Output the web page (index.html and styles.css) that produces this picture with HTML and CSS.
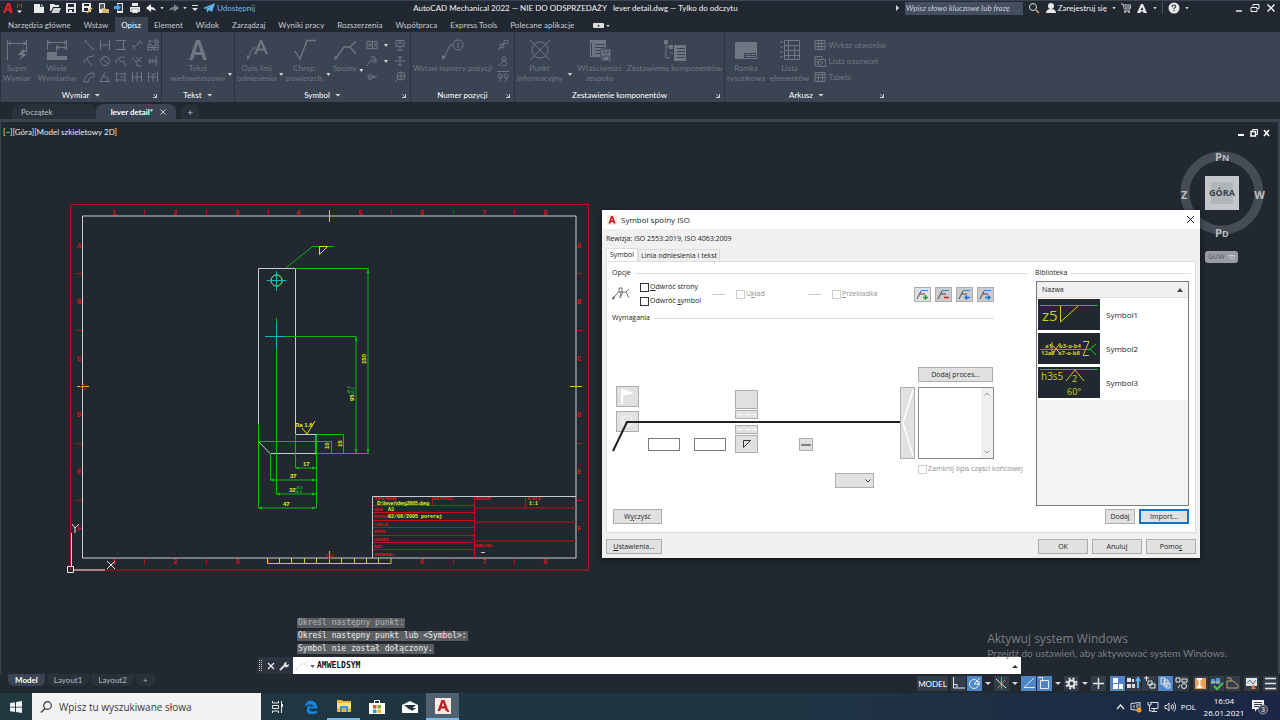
FILE: index.html
```html
<!DOCTYPE html>
<html lang="pl">
<head>
    <meta charset="UTF-8">
    <meta name="viewport" content="width=device-width, initial-scale=1.0">
    <title>AutoCAD Mechanical 2022</title>
    <link rel="stylesheet" href="styles.css">
</head>
<body>
<div class="app">
    <header class="titlebar">
        <div class="quick-tools">
            <svg class="logo" width="24" height="14" viewBox="0 0 24 14"><path fill="#d8232a" d="M2 12L6 2h3l3 10H9l-.7-2.4H5.4L4.6 12zM6 7.6h2L7.200 4.500z"/><path stroke="#d8232a" fill="none" d="M16.500 7V3l2 2 2-2v4"/><path fill="#eee" d="M16 9.500h5L18.500 12z"/></svg>
            <button class="tool" aria-label="Nowy"><svg width="12" height="12"><path fill="#e8e8e8" d="M1 2h6v3h4v6H1z"/><path fill="#b5b5b5" d="M8 2l3 2.500H8z"/></svg></button>
            <button class="tool" aria-label="Otwórz"><svg width="12" height="12"><path fill="#e8e8e8" d="M1 2h4l1 1h4v2H4l-2 4H1z"/><path fill="#cfcfcf" d="M4.500 6H12l-2 5H2.500z"/></svg></button>
            <button class="tool" aria-label="Zapisz"><svg width="12" height="12"><path fill="#e8e8e8" fill-rule="evenodd" d="M1 1h10v10H1zM3 2v3h6V2zM3 7v3h6V7z"/><path fill="#e8e8e8" d="M4 8h3v2H4z"/></svg></button>
            <button class="tool" aria-label="Zapisz jako"><svg width="12" height="12"><path fill="#e8e8e8" fill-rule="evenodd" d="M1 1h9v9H1zM3 2v2h5V2zM3 6v3h4V6z"/><path stroke="#e3b341" stroke-width="1.500" d="M6 11l5-5"/></svg></button>
            <button class="tool" aria-label="Otwórz z sieci"><svg width="12" height="12"><path fill="#e8e8e8" d="M2 1h6v10H2z"/><path fill="#555c66" d="M3 2h4v5H3z"/><path fill="#d9b768" d="M5 6h3l1 1h3v4H5z"/></svg></button>
            <button class="tool" aria-label="Zapisz w sieci"><svg width="12" height="12"><path fill="#e8e8e8" d="M4 1h6v10H4z"/><path fill="#34404e" d="M5 2h4v7H5z"/><path fill="#4ba3e3" d="M1 4h3V2l4 3.500L4 9V7H1z"/></svg></button>
            <button class="tool" aria-label="Drukuj"><svg width="12" height="12"><path fill="#e8e8e8" d="M3 1h6v3H3zM1 5h10v5H1z"/><path fill="#fff" stroke="#555" stroke-width=".5" d="M3 7h6v4H3z"/></svg></button>
            <button class="tool" aria-label="Cofnij"><svg width="12" height="12"><path fill="#eee" d="M1 6l5-4v3q4 0 5 4-2-2-5-1.500V10z"/></svg></button>
            <i class="caret"></i>
            <button class="tool dim" aria-label="Ponów"><svg width="12" height="12"><path fill="#7d848e" d="M11 6L6 2v3Q2 5 1 9q2-2 5-1.500V10z"/></svg></button>
            <i class="caret"></i>
            <button class="tool narrow" aria-label="Dostosuj"><svg width="6" height="8"><path fill="#ddd" d="M0 1h6v1H0zM0 4h6L3 7z"/></svg></button>
            <button class="share"><svg width="12" height="10"><path fill="#5db4f0" d="M0 5L12 0 9 9 6 7 4 10 3.500 6 9 2 2.500 6z"/></svg>Udostępnij</button>
        </div>
        <div class="window-title"><span>AutoCAD Mechanical 2022 — NIE DO ODSPRZEDAŻY</span><span>lever detail.dwg — Tylko do odczytu</span></div>
        <div class="account">
            <svg width="4" height="6"><path fill="#ddd" d="M0 0l3 3-3 3z"/></svg>
            <input class="keyword" type="text" aria-label="Wyszukaj" placeholder="Wpisz słowo kluczowe lub frazę">
            <svg width="12" height="12" fill="none"><circle cx="5" cy="5" r="3.500" stroke="#ddd"/><path stroke="#d9a860" stroke-width="1.500" d="M8 8l3 3"/></svg>
            <button class="sign-in"><svg width="12" height="12" fill="#e8e8e8"><circle cx="6" cy="4" r="3"/><path d="M1 11q0-4 5-4t5 4z"/></svg>Zarejestruj się</button>
            <i class="caret"></i>
            <svg width="10" height="10" fill="none" stroke="#ccc"><path d="M0 1h2l1.500 5H9l1-4H2.500M3 8h6M4 4h5"/><circle cx="4" cy="9" r=".7"/><circle cx="8" cy="9" r=".7"/></svg>
            <svg width="12" height="11" fill="#e8e8e8"><path fill-rule="evenodd" d="M5 1h2l4 9H8L6 8l-2 2H1zM6 4L4.500 7h3z"/></svg>
            <i class="caret"></i>
            <b class="bar"></b>
            <svg width="12" height="12"><circle cx="6" cy="6" r="5.500" fill="#e8e8e8"/><path fill="none" stroke="#333b46" stroke-width="1.200" d="M4.300 5Q4.300 3 6 3t1.700 1.700Q7.700 5.500 6 6.200V7.200M6 8v1.200"/></svg>
            <i class="caret"></i>
        </div>
        <div class="window-buttons">
            <button aria-label="Minimalizuj"><svg width="10" height="10"><path stroke="#eee" stroke-width="1.500" d="M2 8h6"/></svg></button>
            <button aria-label="Przywróć"><svg width="10" height="10" fill="none" stroke="#eee"><path d="M3 3.500V1.500h6v4H7M1 4.500h6v4H1z"/></svg></button>
            <button aria-label="Zamknij"><svg width="10" height="10"><path stroke="#fff" stroke-width="1.300" d="M1.500 1.500l7 7m0-7l-7 7"/></svg></button>
        </div>
    </header>

    <nav class="ribbon-tabs">
        <button>Narzędzia główne</button>
        <button>Wstaw</button>
        <button class="active">Opisz</button>
        <button>Element</button>
        <button>Widok</button>
        <button>Zarządzaj</button>
        <button>Wyniki pracy</button>
        <button>Rozszerzenia</button>
        <button>Współpraca</button>
        <button>Express Tools</button>
        <button>Polecane aplikacje</button>
        <button aria-label="Widok wstążki"><svg width="18" height="7"><rect y="1" width="11" height="5" rx="1" fill="#ddd"/><path fill="#333" d="M4 4.500l1.500-2 1.500 2z"/><path fill="#ccc" d="M13 3h4l-2 2z"/></svg></button>
    </nav>

    <section class="ribbon">
        <div class="panel panel-dim">
            <div class="panel-body">
                <button class="big"><svg width="22" height="22"><path d="M1.500 1v20M20.500 1v12M2 4.500h18M5 2.500L2 4.500l3 2M17 2.500l3 2-3 2"/><path class="solid" d="M17 10l-5 6h4l-3 5 8-6h-4l3-3z"/></svg><span>Super<br>Wymiar</span></button>
                <button class="big"><svg width="22" height="22"><path d="M1.500 1v10M20.500 1v10M2 3.500h18M10.500 6v6M11 8.500h9M4 2L2 3.500 4 5M18 2l2 1.500L18 5M13 7l-2 1.500 2 1.500M18 7l2 1.500-2 1.500"/><path class="solid" d="M1 13h10v4h10v4H1z"/></svg><span>Wiele<br>Wymiarów</span></button>
                <div class="small-grid five">
                    <button aria-label="Wyrównany"><svg width="12" height="12"><path d="M1 3l3-2M2 2l8 8M8 11l3-2"/></svg></button>
                    <button aria-label="Poziomy"><svg width="12" height="12"><path d="M1.500 1v10M10.500 1v10M2 6h8"/></svg></button>
                    <button aria-label="Pionowy"><svg width="12" height="12"><path d="M1 1.500h10M1 10.500h10M8.500 2v8"/></svg></button>
                    <button aria-label="Obrócony"><svg width="12" height="12"><path d="M1 6l3 4M8 1l3 4M3 8l6-5"/></svg></button>
                    <button aria-label="Układ wymiarów"><svg width="12" height="12"><path d="M1 2h5M1 4h3M8 1h3v3H8zM1 6h4v5H1zM7 6h4v5H7zM1 8.500h10"/></svg></button>
                    <button aria-label="Promień"><svg width="12" height="12"><path d="M11 1Q2 1 1 8M4 4l5 7"/></svg></button>
                    <button aria-label="Średnica"><svg width="12" height="12"><circle cx="6" cy="6" r="4.500"/><path d="M3 3l6 6"/></svg></button>
                    <button aria-label="Skrócony"><svg width="12" height="12"><path d="M1 8q0-7 9-6M4 4l2 3 2-1 3 5"/></svg></button>
                    <button aria-label="Współrzędna"><svg width="12" height="12"><path d="M1 3l4 4M5 2l5 5M5 7l6-5M6 7v4h5"/></svg></button>
                    <button aria-label="Oś"><svg width="12" height="12"><path d="M1 6h10M3 3v6M9 1v10M6 4v4"/></svg></button>
                    <button aria-label="Łuk"><svg width="12" height="12"><path d="M1 11Q2 2 11 2M5 11q0-5 6-5M1 11h4M11 2v4"/></svg></button>
                    <button aria-label="Kąt"><svg width="12" height="12"><path d="M6 1L1 10.500h10M4 5q5 0 5 5"/></svg></button>
                    <button aria-label="Bazowy"><svg width="12" height="12"><path d="M1.500 1v10M2 3h8M2 9h8M10 1v4M10 7v4M5 6h6"/></svg></button>
                    <button aria-label="Szeregowy"><svg width="12" height="12"><path d="M1.500 1v10M6 1v10M10.500 1v10M2 6h9"/></svg></button>
                    <button aria-label="Podział"><svg width="12" height="12"><path d="M1.500 1v10M6 3v8M10.500 1v10M2 6h9M4 3h5"/></svg></button>
                </div>
            </div>
            <div class="panel-title"><span>Wymiar</span><i class="caret wide"></i><i class="launch"></i></div>
        </div>
        <div class="panel panel-text">
            <div class="panel-body">
                <button class="big"><svg width="22" height="22"><path class="solid" fill-rule="evenodd" d="M2 21L9 1h4l7 20h-4l-1.500-5H7.500L6 21zM8.500 13h5L11 5z"/></svg><span>Tekst<br>wielowierszowy</span></button>
                <i class="caret"></i>
            </div>
            <div class="panel-title"><span>Tekst</span><i class="caret wide"></i></div>
        </div>
        <div class="panel panel-sym">
            <div class="panel-body">
                <button class="big"><svg width="22" height="22"><path d="M2 19L7 9h3"/><path class="solid" d="M1 21v-5l3 2z"/><path class="solid" fill-rule="evenodd" d="M8 15l6-14h2l6 14h-2.500L18 11.500h-6L10.500 15zM13 9.500h4L15 4z"/></svg><span>Opis linii<br>odniesienia</span></button>
                <i class="caret"></i>
                <button class="big"><svg width="22" height="22"><path d="M1 12l5 8L13 1.500h9" stroke-width="1.400"/></svg><span>Chrop.<br>powierzch.</span></button>
                <i class="caret"></i>
                <button class="big"><svg width="22" height="22"><path d="M2 19L10 8h6M22 2l-6 6 6 7" stroke-width="1.300"/><path class="solid" d="M0 21l1-5 3 3z"/></svg><span>Spoiny</span></button>
                <i class="caret mid"></i>
                <div class="small-grid two">
                    <button aria-label="Tolerancja"><svg width="12" height="12"><path d="M1 2.500h10v7H1zM6.500 3v6M2 6h4M4 4v4M9 4v4"/></svg></button>
                    <i class="caret"></i>
                    <button aria-label="Baza"><svg width="12" height="12"><path d="M2 1.500h8v6H2zM6 8v3M3 11h6M4 6l2-4 2 4"/></svg></button>
                    <button aria-label="Cecha"><svg width="12" height="12"><path d="M1 11l4-6h6M5 2h4v3M6 7h5"/></svg></button>
                    <i class="caret"></i>
                    <button aria-label="Ruch"><svg width="12" height="12"><path d="M6 1v4M4 3l2-2 2 2M1 6h10M6 7v4M4 9l2 2 2-2"/></svg></button>
                    <button aria-label="Stożek"><svg width="12" height="12"><path d="M1 6h10M3 3v6l6-3z"/></svg></button>
                    <i></i>
                    <button aria-label="Środek"><svg width="12" height="12"><circle cx="7" cy="5" r="4"/><path d="M7 1v8M3 5h8M1 11l3-3"/></svg></button>
                </div>
            </div>
            <div class="panel-title"><span>Symbol</span><i class="caret wide"></i><i class="launch"></i></div>
        </div>
        <div class="panel panel-num">
            <div class="panel-body">
                <button class="big"><svg width="22" height="22"><path d="M2 19L8 6h3"/><circle cx="16" cy="6" r="5"/><path d="M16 3v6"/><path class="solid" d="M0 21v-5l4 2z"/></svg><span>Wstaw numery pozycji</span></button>
                <div class="small-grid one">
                    <button aria-label="Numer"><svg width="12" height="12"><circle cx="5" cy="7" r="2"/><circle cx="9" cy="3" r="2"/><path d="M1 11l7-8"/></svg></button>
                    <button aria-label="Grupa"><svg width="12" height="12"><circle cx="7" cy="4" r="2"/><circle cx="7" cy="8.500" r="2.500"/><path d="M1 10h2"/></svg></button>
                    <button aria-label="Rozmieść"><svg width="12" height="12"><path d="M0 .5h12M5 5l-3 6M11 5l-3 6"/><circle cx="3" cy="5" r="2"/><circle cx="9" cy="5" r="2"/></svg></button>
                </div>
            </div>
            <div class="panel-title"><span>Numer pozycji</span><i class="launch"></i></div>
        </div>
        <div class="panel panel-bom">
            <div class="panel-body">
                <button class="big"><svg width="22" height="22"><circle cx="11" cy="11" r="8"/><path d="M1 1l20 20M21 1L1 21"/></svg><span>Punkt<br>informacyjny</span></button>
                <i class="caret"></i>
                <button class="big"><svg width="22" height="22"><path class="solid" fill-rule="evenodd" d="M1 1h16v17H1zM6 5v1h10V5zM6 8v1h10V8zM6 11v1h10v-1zM6 14v1h10v-1zM2 4v13h1V4z"/><path class="solid edge" d="M12 10h10v12H12z"/><path d="M15 11v3h4v-3M14 21v-4h6v4" class="cut"/></svg><span>Właściwości<br>zespołu</span></button>
                <button class="big"><svg width="22" height="22"><path class="solid" fill-rule="evenodd" d="M0 1h4v4H0zM5 6h4v4H5zM10 6h12v16H10zM13 9v1h8V9zM13 12v1h8v-1zM13 15v1h8v-1zM13 18v1h8v-1z"/><path d="M2 5v14h4M2 8h3M6 14h3"/></svg><span>Zestawienie komponentów</span></button>
            </div>
            <div class="panel-title"><span>Zestawienie komponentów</span><i class="launch"></i></div>
        </div>
        <div class="panel panel-sheet">
            <div class="panel-body">
                <button class="big"><svg width="22" height="22"><path class="solid" fill-rule="evenodd" d="M0 3h22v17H0zM9 14v5h12v-5zM10 15h5v1h-5zM16 15h4v1h-4zM10 17h10v1H10z"/></svg><span>Ramka<br>rysunkowa</span></button>
                <button class="big"><svg width="22" height="22"><path d="M5.500 1.500h15v19h-15zM9.500 2v18M6 6.500h15M6 11.500h15M6 16.500h15M1 3h3M1 8h3M1 13h3M1 18h3M15.500 6v14"/></svg><span>Lista<br>elementów</span></button>
                <div class="rows">
                    <button><svg width="12" height="12"><path d="M1 1.500h10v9H1zM1 4.500h10M1 7.500h10M4.500 1v9M7.500 1v9"/></svg>Wykaz otworów</button>
                    <button><svg width="12" height="12"><path d="M1 1.500h7v2M1 1v10h3M1 4h3M1 7h3M4.500 4.500h7v7h-7zM6 6l3 2-3 2"/></svg>Lista pasowań</button>
                    <button><svg width="12" height="12"><path d="M1 1.500h10v9H1zM1 3.500h10M1 6.500h10M4.500 3v8M8.500 3v8"/></svg>Tabela</button>
                </div>
            </div>
            <div class="panel-title"><span>Arkusz</span><i class="caret wide"></i><i class="launch"></i></div>
        </div>
    </section>

    <nav class="file-tabs">
        <button class="file-tab">Początek</button>
        <button class="file-tab active">lever detail*<svg width="6" height="6"><path stroke="#ccc" d="M.5.5l5 5m0-5l-5 5"/></svg></button>
        <button class="file-tab add" aria-label="Nowy rysunek">+</button>
    </nav>

    <main class="canvas">
        <div class="view-label">[−][Góra][Model szkieletowy 2D]</div>
        <div class="view-buttons">
            <svg width="8" height="8"><path stroke="#fff" stroke-width="2" d="M1 6h6"/></svg>
            <svg width="8" height="8" fill="none" stroke="#fff"><path d="M2.500 2V.5h5v5H6"/><path stroke-width="1.500" d="M1 2.500h4.500V7H1z"/></svg>
            <svg width="8" height="8"><path stroke="#fff" stroke-width="1.500" d="M1 1l5 6m0-6L1 7"/></svg>
        </div>

        <svg class="drawing" width="540" height="385" viewBox="60 195 540 385">
            <g class="red">
                <path d="M70.500 204.500h518v365.500h-518z"/>
                <path d="M144.500 210v5M206.500 210v5M268.500 210v5M391.500 210v5M453.500 210v5M514.500 210v5M144.500 559v5M206.500 559v5M268.500 559v5M453.500 559v5M514.500 559v5"/>
                <path d="M77 273.500h6M77 330.500h6M77 443.500h6M77 500.500h6M576 273.500h6M576 330.500h6M576 443.500h6M576 500.500h6"/>
            </g>
            <g class="frame-text">
                <text x="114" y="215">1</text><text x="175" y="215">2</text><text x="237" y="215">3</text><text x="298" y="215">4</text><text x="360" y="215">5</text><text x="422" y="215">6</text><text x="484" y="215">7</text><text x="545" y="215">8</text>
                <text x="114" y="564">1</text><text x="175" y="564">2</text><text x="237" y="564">3</text><text x="422" y="564">6</text><text x="484" y="564">7</text><text x="545" y="564">8</text>
                <text x="79" y="248">A</text><text x="79" y="304">B</text><text x="79" y="361">C</text><text x="79" y="417">D</text><text x="79" y="474">E</text><text x="79" y="531">F</text>
                <text x="579" y="248">A</text><text x="579" y="304">B</text><text x="579" y="361">C</text><text x="579" y="417">D</text><text x="579" y="474">E</text><text x="579" y="531">F</text>
            </g>
            <path class="white" d="M82.500 216h493.500v342H82.500zM372.500 558v-61.500h203.500"/>
            <!-- centring marks and scale bar -->
            <path class="yellow" d="M329.500 210v12M77 386.500h12M570 386.500h12M329.500 551v8M267.500 558v5.500h123.500v-5.500M279.500 558v6M291.500 558v6M304.500 558v6M316.500 558v6M329.500 558v6M341.500 558v6M354.500 558v6M366.500 558v6M378.500 558v6"/>
            <path class="red" d="M80 387l5-3v6zM326 555h7l-3.500 4z"/>
            <!-- lever outline -->
            <path class="white" d="M258.500 441V268.500h37V434.500h20.500v19h-46l-11.500-12"/>
            <circle class="white" cx="276.500" cy="280.500" r="5.500"/>
            <path class="green" d="M276.500 274.500a6 6 0 0 1 0 12M286 268l26.500-21.500h21.500M295 268.500h74M368 268v185M316 453.500h53M276.500 318v176M277 336.500h79M356 336v117M258 441.500h73.500V453M316 434.500h27.500V453M258.500 424v84h58v-74M295.500 434v34h21M270.500 453v27h46M276.500 494h40"/>
            <path class="green arrow" d="M366.500 273l1.500-4 1.500 4zM366.500 449l1.500 4 1.500-4zM354.500 341l1.500-4 1.500 4zM354.500 449l1.500 4 1.500-4zM299 466.500l-4 1.500 4 1.500zM312 466.500l4 1.500-4 1.500zM274 478.500l-4 1.500 4 1.500zM312 478.500l4 1.500-4 1.500zM280 492.500l-4 1.500 4 1.500zM312 492.500l4 1.500-4 1.500zM262 506.500l-4 1.500 4 1.500zM312 506.500l4 1.500-4 1.500z"/>
            <path class="cyan" d="M266.500 280.500h20M276.500 271v20M265 336.500h20M276.500 323v25"/>
            <path class="yellow bright" d="M327.500 246.500h-8v8l8-8M302 428l5 6 8-13"/>
            <g class="dim-text">
                <text x="295" y="427">Ra 1.6</text>
                <text x="303" y="466">17</text><text x="290" y="478">37</text><text x="289" y="492">32</text><text x="283" y="506">47</text>
                <text transform="translate(366 364) rotate(-90)">150</text>
                <text transform="translate(354 401) rotate(-90)">95</text>
                <text transform="translate(329 449) rotate(-90)">10</text>
                <text transform="translate(342 447) rotate(-90)">15</text>
            </g>
            <g class="tol-text">
                <text x="295" y="489">+0.1</text><text x="295" y="493">-0.1</text>
                <text transform="translate(350 394) rotate(-90)">+0.1</text><text transform="translate(354 394) rotate(-90)">-0.1</text>
            </g>
            <!-- title block -->
            <path class="red" d="M474.500 497v61M432.500 497v9M525.500 497v10M373 505.500h101M373 512.500h101M373 520.500h101M373 527.500h101M373 535.500h101M373 542.500h101M373 549.500h101M475 508h101M475 522h101M475 541h101"/>
            <g class="block-text">
                <text x="374" y="500">ITEM NAME</text><text x="433" y="500">MATERIAL</text><text x="475" y="500">WEIGHT</text><text x="527" y="500">SCALE</text>
                <text x="374" y="511">SIZE</text><text x="374" y="518">DESIGN</text><text x="374" y="526">CHECK</text><text x="374" y="533">APPR.</text><text x="374" y="541">ISSUED</text><text x="374" y="548">REV.</text><text x="374" y="556">GENERAL</text><text x="475" y="547">DWG.NO.</text>
            </g>
            <g class="dim-text">
                <text class="path" x="377" y="505">D:\lever\dwg2005.dwg</text>
                <text class="mono" x="388" y="511">A3</text><text class="mono" x="388" y="518">02/06/2005 poreraj</text><text class="mono" x="529" y="505">1:1</text>
            </g>
            <path class="white" d="M481 552.500h4"/>
            <!-- ucs icon -->
            <path class="ucs" d="M71.500 533v33M67.500 566.500h6v6h-6zM74 570h31M72 524l3 4v5M79 524l-4 4M107 561l8 8M115 561l-8 8"/>
        </svg>

        <div class="view-cube">
            <svg width="86" height="86"><circle cx="43" cy="43" r="37" fill="none" stroke="#454c56" stroke-width="9"/><path fill="#c3c7ca" d="M26 26h34v34H26z"/><path fill="#aeb6bb" d="M32 32h22v22H32z"/></svg>
            <span class="north">P<small>N</small></span><span class="south">P<small>D</small></span><span class="west">Z</span><span class="east">W</span><span class="face">GÓRA</span>
            <button class="ucs-menu">GUW<svg width="8" height="5" fill="none" stroke="#ccc"><path d="M1 .5h6L4 4z"/></svg></button>
        </div>

        <div class="watermark"><strong>Aktywuj system Windows</strong><span>Przejdź do ustawień, aby aktywować system Windows.</span></div>

        <div class="command">
            <div class="history"><span class="old">Określ następny punkt:</span><span>Określ następny punkt lub &lt;Symbol&gt;:</span><span>Symbol nie został dołączony.</span></div>
            <div class="command-line">
                <div class="command-tools">
                    <svg width="4" height="12"><path stroke="#ccc" stroke-dasharray="1 1" d="M.5 0v12M2.500 0v12"/></svg>
                    <svg width="8" height="8"><path stroke="#eee" stroke-width="1.300" d="M1 1l6 6m0-6L1 7"/></svg>
                    <svg width="10" height="10"><path stroke="#ddd" stroke-width="2" d="M1 9l5-5"/><path fill="#ddd" d="M5 5q-1-4 3-4L7 3l1 1 2-1q0 4-4 3z"/></svg>
                </div>
                <svg class="weld" width="22" height="12" fill="none" stroke="#ddd"><path d="M1 10l5-6h4l3-3M10 4l3 3"/><path fill="#666" stroke="none" d="M15 5h5l-2.500 3z"/></svg>
                <input type="text" aria-label="Polecenie" value="AMWELDSYM">
                <svg class="up" width="6" height="4"><path fill="#333" d="M0 4l3-3 3 3z"/></svg>
            </div>
        </div>

        <section class="dialog" role="dialog" aria-label="Symbol spoiny ISO">
            <header class="dialog-title">
                <svg width="10" height="10"><path fill="#fbe9e5" d="M0 0h10v10H0z"/><path fill="#c41e25" fill-rule="evenodd" d="M1.500 8.500L4 1h2l2.500 7.500H6.500L6 7H4l-.5 1.500zM4.300 5.500h1.400L5 3z"/></svg>
                <span>Symbol spoiny ISO</span>
                <button aria-label="Zamknij"><svg width="9" height="9"><path stroke="#222" d="M1 1l7 7m0-7L1 8"/></svg></button>
            </header>
            <p class="revision">Rewizja: ISO 2553:2019, ISO 4063:2009</p>
            <div class="tabs"><button class="active">Symbol</button><button>Linia odniesienia i tekst</button></div>
            <div class="page">
                <div class="editor">
                    <h2 class="legend"><span>Opcje</span></h2>
                    <div class="options">
                        <svg width="18" height="14" fill="none" stroke="#777"><path d="M1 12L6 5h8M17 2l-3 3 3 6M7 5V1h3v4M9 4l-1 7 3-6"/><path fill="#555" stroke="none" d="M0 13l1-4 2 2z"/></svg>
                        <div class="checks">
                            <label><input type="checkbox"><span><u>O</u>dwróć strony</span></label>
                            <label><input type="checkbox"><span>Odwróć <u>s</u>ymbol</span></label>
                        </div>
                        <i class="dash"></i>
                        <label class="off layout"><input type="checkbox" disabled><span>U<u>k</u>ład</span></label>
                        <i class="dash"></i>
                        <label class="off"><input type="checkbox" disabled><span><u>P</u>rzekładka</span></label>
                        <div class="line-buttons">
                            <button class="push light" aria-label="Dodaj linię"><svg width="15" height="13" fill="none"><path stroke="#444" d="M2 11L6 3M5 6h5"/><path stroke="#2f8fe0" d="M6 2.500h7"/><path stroke="#1ca038" stroke-width="1.500" d="M8 9.500h5M10.500 7v5"/></svg></button>
                            <button class="push" aria-label="Usuń linię"><svg width="15" height="13" fill="none"><path stroke="#444" d="M2 11L6 3M5 6h5"/><path stroke="#2f8fe0" d="M6 2.500h7"/><path stroke="#e01b24" stroke-width="1.500" d="M8 9.500h5"/></svg></button>
                            <button class="push" aria-label="Poprzednia linia"><svg width="15" height="13" fill="none"><path stroke="#444" d="M2 11L6 3M5 6h5"/><path stroke="#2f8fe0" d="M6 2.500h7"/><path stroke="#0f77d6" stroke-width="1.300" d="M8 9.500h5M10 7.500l-2 2 2 2"/></svg></button>
                            <button class="push" aria-label="Następna linia"><svg width="15" height="13" fill="none"><path stroke="#444" d="M2 11L6 3M5 6h5"/><path stroke="#2f8fe0" d="M6 2.500h7"/><path stroke="#0f77d6" stroke-width="1.300" d="M7 9.500h5M10 7.500l2 2-2 2"/></svg></button>
                        </div>
                    </div>
                    <h2 class="legend short"><span>Wymagania</span></h2>
                    <div class="weld-row">
                        <!-- weld symbol, controls sit on the reference line -->
                        <div class="weld-canvas">
                            <button class="push node flag" aria-label="Spoina montażowa"><svg width="21" height="19"><path fill="#fff" d="M4 2h2l11 4-11 3v8H4z"/></svg></button>
                            <button class="push node around" aria-label="Spoina dookoła"><svg width="21" height="19"><circle cx="10" cy="9" r="5" fill="none" stroke="#f2f2f2" stroke-width="2"/></svg></button>
                            <svg class="ref-line" width="290" height="32" fill="none"><path stroke="#231f20" stroke-width="2" d="M1 31L15 2h274"/></svg>
                            <input class="node size-a" type="text" aria-label="Grubość">
                            <input class="node size-b" type="text" aria-label="Wymiar">
                            <button class="push node sym-top" aria-label="Symbol górny"></button>
                            <button class="push node dash-top" aria-label="Linia górna"><svg width="20" height="4"><path stroke="#fff" stroke-dasharray="5 2" d="M1 1.500h19"/></svg></button>
                            <button class="push node dash-low" aria-label="Linia dolna"><svg width="20" height="4"><path stroke="#fff" stroke-dasharray="5 2" d="M1 1.500h19"/></svg></button>
                            <button class="push node sym-low" aria-label="Symbol dolny"><svg width="10" height="10" fill="none" stroke="#333"><path d="M1.500 8.500v-7h7z"/></svg></button>
                            <button class="push node contour" aria-label="Kontur"><svg width="12" height="4"><path stroke="#222" d="M1 2h10"/></svg></button>
                            <button class="push node tail" aria-label="Koniec"><svg width="12" height="70"><path fill="none" stroke="#fff" stroke-width="1.500" d="M11 2L1 35l10 33"/></svg></button>
                            <select class="push node pick" aria-label="Metoda"><option></option></select>
                            <svg class="node chevron" width="6" height="4" fill="none"><path stroke="#444" d="M.5.5L3 3 5.500.5"/></svg>
                        </div>
                        <div class="tail-column">
                            <button class="push">Dodaj proces...</button>
                            <div class="tail-box">
                                <textarea aria-label="Opis części końcowej"></textarea>
                                <div class="scroll"><svg width="6" height="4" fill="none"><path stroke="#999" d="M.5 3.500L3 1l2.500 2.500"/></svg><svg width="6" height="4" fill="none"><path stroke="#999" d="M.5.5L3 3 5.500.5"/></svg></div>
                            </div>
                            <label class="off"><input type="checkbox" disabled><span>Zamknij opis części końcowej</span></label>
                        </div>
                    </div>
                    <button class="push clear">W<u>y</u>czyść</button>
                </div>
                <div class="library">
                    <h2 class="legend"><span>Biblioteka</span></h2>
                    <div class="list">
                        <table>
                            <thead><tr><th colspan="2"><div class="head">Nazwa<svg width="6" height="4"><path fill="#444" d="M0 4l3-4 3 4z"/></svg></div></th></tr></thead>
                            <tbody>
                                <tr><td class="thumb"><svg width="62" height="31"><path class="line" d="M2 6.500h58"/><path stroke="#cfcf20" fill="none" d="M22.500 7v16L40 7"/><text x="4" y="22">z5</text></svg></td><td>Symbol1</td></tr>
                                <tr><td class="thumb"><svg width="62" height="31"><path class="line" d="M2 16.500h50M58 11l-6 5 6 6"/><path stroke="#cfcf20" fill="none" d="M45 8.500h6l-6 14h6M14 9v13l8-12M14 12l8 8"/><text class="tiny" x="7" y="15">a1</text><text class="tiny" x="21" y="15">b3-o-b4</text><text class="tiny" x="3" y="22">12a1</text><text class="tiny" x="20" y="22">a7-o-b8</text></svg></td><td>Symbol2</td></tr>
                                <tr><td class="thumb"><svg width="62" height="31"><path class="line" d="M2 2.500h58"/><path stroke="#cfcf20" fill="none" d="M28 14l9-11 9 11"/><text class="mid" x="3" y="13">h3s5</text><text class="low" x="34" y="15">2</text><text class="low" x="29" y="28">60°</text></svg></td><td>Symbol3</td></tr>
                            </tbody>
                        </table>
                    </div>
                    <div class="library-buttons"><button class="push">Dodaj</button><button class="push wide focus">Import...</button></div>
                </div>
            </div>
            <footer class="dialog-footer">
                <button class="push first"><u>U</u>stawienia...</button>
                <button class="push wide">OK</button>
                <button class="push wide">Anuluj</button>
                <button class="push wide">Pomo<u>c</u></button>
            </footer>
        </section>
    </main>

    <div class="status">
        <nav class="layout-tabs">
            <button class="active">Model</button><button>Layout1</button><button>Layout2</button><button>+</button>
        </nav>
        <div class="status-tools">
            <button class="text">MODEL</button>
            <button aria-label="Orto"><svg><path d="M2.500 1v11H14M3 8.500h3v3"/></svg></button>
            <button class="on" aria-label="Biegunowe"><svg><circle cx="7" cy="8" r="4.500"/><path d="M7 8h6M7 8l6-6M12 5v4"/></svg></button>
            <i class="caret"></i>
            <button aria-label="Izometria"><svg><path stroke="#e0606a" d="M11 4L4 12"/><path stroke="#59b37a" d="M7.500 1v12"/><path d="M2 3l10 9"/></svg></button>
            <i class="caret"></i>
            <button class="on" aria-label="Śledzenie"><svg><path d="M13 2L3 11.500h11"/></svg></button>
            <button class="on" aria-label="Przyciąganie"><svg><path d="M3.500 4.500h8v8h-8zM1.500 1.500h4v4"/></svg></button>
            <i class="caret"></i>
            <button aria-label="Ustawienia"><svg><circle cx="7.500" cy="7.500" r="3" stroke-width="2"/><circle cx="7.500" cy="7.500" r="5" stroke-width="2" stroke-dasharray="2 2"/></svg></button>
            <i class="caret"></i>
            <button aria-label="Skala"><svg><path stroke-width="1.400" d="M7.500 2v11M2 7.500h11"/></svg></button>
            <button class="on gap" aria-label="Bloki"><svg><path fill="#fff" stroke="none" d="M3 2h5v5H3zM3 8h5v5H3zM9 8h4v5H9z"/></svg></button>
            <button aria-label="Struktura"><svg><path fill="#ddd" stroke="none" d="M1 2h4v4H1zM1 8h4v4H1zM6 8h3v4H6zM6 3h2v3H6z"/><path stroke="#5db4f0" stroke-width="2" d="M12 12V3M10 5l2-3 2 3"/></svg></button>
            <button aria-label="Warstwy"><svg><path d="M2 2h5M4.500 0v5M6 5h4v4H6zM8 8h5v4H8z"/></svg></button>
            <button class="on" aria-label="Zasady"><svg><path d="M3 2h4v6H3zM6 4h4v6H6zM8 7h4v5H8z"/></svg></button>
            <button aria-label="Kształty"><svg><path d="M2 2h4v4H2zM8 3h5v3H8zM6 9l-2 3"/><circle cx="10" cy="10" r="2.500"/></svg></button>
            <button class="gap" aria-label="Wykres"><svg><path fill="#e8a25a" stroke="none" d="M2 2h11v11H2z"/><path stroke="#fff" stroke-width="2" d="M4 3h5M6.500 4v7M4 11h5"/></svg></button>
            <button aria-label="Weryfikuj"><svg><path fill="#4c95d8" stroke="none" d="M2 3h4v5H2zM7 2h4v6H7z"/><path stroke="#e8c95a" d="M2 6h9"/><path stroke="#4fc24f" stroke-width="2" d="M5 10l3 3 6-6"/></svg></button>
            <button aria-label="Kopia"><svg><path stroke="#c8a06a" d="M2 12V5h6l5 4v3zM2 2h4v3"/></svg></button>
            <button class="gap" aria-label="Monitor"><svg><path fill="#e5e5e5" stroke="none" d="M2 2h11v8H2z"/><path stroke="#4479a8" d="M3 7l3-3 3 4 3-4"/><path fill="#e07a3c" stroke="none" d="M9 8l3 5H7z"/></svg></button>
            <button class="gap" aria-label="Menu"><svg><path stroke-width="1.400" d="M2 2.500h11M2 7.500h11M2 12.500h11"/></svg></button>
        </div>
    </div>

    <footer class="taskbar">
        <button class="start" aria-label="Start"><svg width="12" height="12" fill="#f0f0f0"><path d="M0 2l5-.8v4.500H0zM6 1l6-1v5.700H6zM0 6.500h5V11l-5-.8zM6 6.500h6V12l-6-1z"/></svg></button>
        <label class="search"><svg width="12" height="12" fill="none" stroke="#333" stroke-width="1.200"><circle cx="7.500" cy="4.500" r="3.800"/><path d="M5 7.500L1 11.500"/></svg><input type="text" placeholder="Wpisz tu wyszukiwane słowa"></label>
        <button aria-label="Widok zadań"><svg width="14" height="12" fill="none" stroke="#e5e5e5"><path d="M1.500 0v2h6V0M1.500 4.500h6v3h-6zM1.500 12v-2h6v2M10.500 0v12"/><path d="M10 4.500h2" stroke-width="3"/></svg></button>
        <button aria-label="Edge"><svg width="14" height="14"><path fill="#1583e0" d="M1 7Q1 1 7 .5 13 1 13.500 8.500H5q.5 3 4 3 2 0 4-1v2.500q-7 3-10-1Q2 9 4 6q1-1.500 3-2Q3 4 1 7zM5.200 6.500h4.300Q9 4.500 7.500 4.500t-2.300 2z"/></svg></button>
        <button class="open" aria-label="Eksplorator"><svg width="16" height="14"><path fill="#f2b632" d="M1 1h5l1 1h8v11H1z"/><path fill="#ffe08a" d="M1 4h14v5H1z"/><path fill="#3c9ae0" d="M4 7h8v6h-2V9.500H6V13H4z"/></svg></button>
        <button aria-label="Sklep"><svg width="16" height="16"><path fill="none" stroke="#fff" d="M5.500 5V1.500h5V5"/><path fill="#fff" d="M0 4h16v11H0z"/><path fill="#e8542c" d="M4 6h3.500v3.500H4z"/><path fill="#7cb518" d="M8.500 6H12v3.500H8.500z"/><path fill="#1fa2e0" d="M4 10.500h3.500V14H4z"/><path fill="#f5b50a" d="M8.500 10.500H12V14H8.500z"/></svg></button>
        <button aria-label="Poczta"><svg width="16" height="14"><path fill="#fff" d="M0 5l8-4 8 4v8H0z"/><path fill="#203340" d="M2 5l12 0-6 5zM8 8l6 0-4 3z"/></svg></button>
        <button class="open current" aria-label="AutoCAD"><svg width="16" height="16"><path fill="#fbe9e5" d="M0 0h16v16H0z"/><path fill="#b81e26" fill-rule="evenodd" d="M2.500 13L6.500 2h3l4 11h-2.700L10 10.500H6L5.200 13zM6.700 8.300h2.600L8 4.500z"/><path fill="#d8232a" d="M12 12h2v2h-2z"/></svg></button>
        <div class="tray">
            <svg width="9" height="6" fill="none" stroke="#eee" stroke-width="1.200"><path d="M1 5l3.500-4L8 5"/></svg>
            <svg width="12" height="12" fill="none" stroke="#ddd"><path d="M1 2.500l9-1v8l-9-1zM4 4v3M6 4h3M6 6h2"/><circle cx="9" cy="9" r="2.500" fill="#f59a23" stroke="none"/></svg>
            <svg width="12" height="12" fill="none" stroke="#ddd"><path d="M3 1.500h8v6H4M1 1v3h3V1M2.500 4v6h3M7 8v2M5 10.500h5"/></svg>
            <svg width="12" height="12" fill="none" stroke="#ddd"><path d="M1 4.500h2l2-2.500v8L3 7.500H1zM7 4q1.500 2 0 4M8.500 3q2.500 3 0 6M10 1.500q3.500 4.500 0 9"/></svg>
            <span class="lang">POL</span>
            <time>16:04<br>26.01.2021</time>
            <svg class="notes" width="16" height="16"><path fill="#f0f0f0" d="M0 1h12v9H5l-2 3v-3H0z"/><path stroke="#333c4c" d="M2 3.500h8M2 5.500h8M2 7.500h5"/><circle cx="11" cy="10.500" r="4.500" fill="#3b4350" stroke="#99a"/><text x="9" y="13">3</text></svg>
        </div>
    </footer>
</div>
</body>
</html>
```
FILE: styles.css
```css
* {
    box-sizing: border-box;
}

body {
    margin: 0;
    background: #212830;
    color: #e6e8ea;
    font-family: Lato, "Open Sans", sans-serif;
    font-size: 8px;
    line-height: 10px;
}

button, input, select, textarea {
    font: inherit;
    color: inherit;
    margin: 0;
    padding: 0;
    border: none;
    background: none;
    border-radius: 0;
}

button {
    white-space: nowrap;
}

svg {
    flex: none;
    display: block;
}

.app {
    display: flex;
    flex-direction: column;
    min-height: 100vh;
}

.caret {
    flex: none;
    width: 4px;
    height: 3px;
    background: #d5d8dc;
    clip-path: polygon(0 0, 100% 0, 50% 100%);
}

.caret.wide {
    width: 6px;
    height: 3px;
}

/* title bar */
.titlebar {
    display: flex;
    align-items: center;
    height: 17px;
    padding: 0 4px 2px 1px;
    border-top: 1px solid #3b4453;
    background: #222831;
}

.quick-tools, .account, .window-buttons {
    display: flex;
    align-items: center;
}

.quick-tools .logo {
    margin-right: 6px;
}

.tool {
    width: 16px;
    display: flex;
    justify-content: center;
}

.quick-tools .caret {
    margin: 0 2px 0 1px;
}

.tool.narrow {
    width: 12px;
}

.share {
    display: flex;
    align-items: center;
    gap: 2px;
    margin-left: 2px;
    color: #6fbdf2;
}

.window-title {
    display: flex;
    gap: 6px;
    margin: 0 auto;
    color: #f2f3f4;
}

.account {
    gap: 5px;
}

.keyword {
    width: 118px;
    height: 13px;
    padding: 0 1px;
    background: #444e61;
    font-style: italic;
}

.keyword::placeholder {
    color: #c9cdd4;
    opacity: 1;
}

.sign-in {
    display: flex;
    align-items: center;
    gap: 1px;
    color: #f2f3f4;
}

.bar {
    width: 1px;
    height: 12px;
    background: #4a5260;
}

.window-buttons {
    gap: 6px;
    margin-left: 45px;
}

/* ribbon */
.ribbon-tabs {
    display: flex;
    height: 15px;
    padding-left: 2px;
    background: #222831;
    color: #c5c9cf;
}

.ribbon-tabs button {
    padding: 1px 7px 0 6px;
}

.ribbon-tabs .active {
    background: #3b4453;
    color: #fff;
}

.ribbon-tabs button:last-child {
    padding-left: 12px;
}

.ribbon {
    display: flex;
    height: 70px;
    background: #3b4453;
    border-left: 1px solid #2c333f;
}

.panel {
    flex: none;
    display: flex;
    flex-direction: column;
    justify-content: space-between;
    border-right: 1px solid #2c333f;
}

.panel-dim { width: 161px; }
.panel-text { width: 73px; }
.panel-sym { width: 176px; }
.panel-num { width: 104px; }
.panel-bom { width: 210px; }
.panel-sheet { width: 163px; border-right: none; }

.panel-body {
    display: flex;
    justify-content: space-between;
    align-items: flex-start;
    padding: 7px 2px 0;
    color: #6f7784;
}

.panel-text .panel-body {
    padding-left: 8px;
}

.panel-body svg {
    fill: none;
    stroke: currentColor;
}

.panel-body .solid {
    fill: currentColor;
    stroke: none;
}

.panel-body .edge {
    stroke: #3b4453;
}

.panel-body .cut {
    stroke: #3b4453;
}

.panel-body .caret {
    margin-top: 34px;
}

.panel-body .caret.mid {
    margin-top: 30px;
}

.big {
    display: flex;
    flex-direction: column;
    align-items: center;
    gap: 2px;
}

.small-grid {
    display: grid;
    gap: 4px;
}

.small-grid.five {
    grid-template-columns: repeat(5, 12px);
}

.small-grid.two {
    grid-template-columns: 12px 4px 12px;
    column-gap: 6px;
    margin-right: 2px;
}

.panel-body .small-grid .caret {
    margin-top: 5px;
}

.small-grid.one {
    margin-right: 3px;
}

.rows {
    display: flex;
    flex-direction: column;
    gap: 4px;
}

.rows button {
    display: flex;
    align-items: center;
    gap: 2px;
    height: 12px;
}

.panel-title {
    position: relative;
    display: flex;
    justify-content: center;
    align-items: center;
    gap: 5px;
    padding-bottom: 2px;
    color: #fff;
}

.launch {
    position: absolute;
    right: 4px;
    bottom: 4px;
    width: 4px;
    height: 4px;
    border-right: 1px solid #c5c9cf;
    border-bottom: 1px solid #c5c9cf;
    background: linear-gradient(45deg, transparent 40%, #a5abb4 41%, #a5abb4 60%, transparent 61%);
}

/* file tabs */
.file-tabs {
    display: flex;
    align-items: flex-end;
    height: 20px;
    padding: 0 0 0 12px;
    border-bottom: 3px solid #3b4453;
}

.file-tab {
    display: flex;
    align-items: center;
    gap: 7px;
    height: 15px;
    padding: 0 43px 0 9px;
    border-radius: 8px 8px 0 0;
    background: #29313b;
    color: #bcc1c8;
}

.file-tab.active {
    padding: 0 10px 0 15px;
    background: #3b4453;
    color: #fff;
    font-weight: bold;
}

.file-tab.add {
    margin-left: 5px;
    padding: 0 6px;
    font-size: 10px;
}

/* drawing area */
.canvas {
    position: relative;
    flex: 1;
    min-height: 552px;
    overflow: hidden;
    border-right: 2px solid #3b4453;
    border-left: 1px solid #3b4453;
}

.view-label {
    padding: 5px 2px;
}

.view-buttons {
    position: absolute;
    top: 7px;
    right: 7px;
    display: flex;
    gap: 5px;
}

.drawing {
    position: absolute;
    left: 59px;
    top: 73px;
    fill: none;
}

.red { stroke: #c01016; }
.white { stroke: #c9cdd0; }
.yellow { stroke: #cfcf20; }
.yellow.bright { stroke: #e6e600; }
.green { stroke: #11b511; }
.cyan { stroke: #15b5bd; }
.ucs { stroke: #e5e7e9; }

.arrow {
    fill: #11b511;
    stroke: none;
}

.frame-text {
    fill: #e01016;
    font: bold 7px "Liberation Mono", monospace;
    text-anchor: middle;
}

.dim-text {
    fill: #f0f020;
    font: bold 6px "Liberation Sans", sans-serif;
}

.dim-text .path {
    font-size: 5px;
}

.dim-text .mono {
    font-family: "Liberation Mono", monospace;
    font-size: 5px;
}

.block-text {
    fill: #f01016;
    font: bold 4px "Liberation Sans", sans-serif;
}

.tol-text {
    fill: #11d511;
    font: bold 4px "Liberation Sans", sans-serif;
}

.view-cube {
    position: absolute;
    top: 28px;
    right: 13px;
    width: 86px;
    height: 120px;
    font-family: "Open Sans", sans-serif;
    font-size: 11px;
    font-weight: bold;
    color: #b9bdc1;
}

.view-cube span {
    position: absolute;
}

.view-cube small {
    font-size: 9px;
}

.north { top: 2px; left: 36px; }
.south { top: 78px; left: 36px; }
.west { top: 40px; left: 2px; }
.east { top: 40px; right: 0; }

.view-cube .face {
    top: 38px;
    left: 26px;
    width: 34px;
    text-align: center;
    font-size: 9px;
    color: #38424c;
}

.ucs-menu {
    display: flex;
    align-items: center;
    gap: 3px;
    width: 33px;
    height: 12px;
    margin: 15px 0 0 26px;
    padding: 0 3px;
    border-radius: 3px;
    background: #9a9da8;
    color: #4f535e;
    font-size: 7px;
    font-weight: normal;
}

.watermark {
    position: absolute;
    right: 51px;
    bottom: 14px;
    z-index: 2;
    display: flex;
    flex-direction: column;
    font-size: 10px;
    line-height: 13px;
    color: #7b7f83;
}

.watermark strong {
    font-family: "Open Sans", sans-serif;
    font-size: 12px;
    line-height: 17px;
    font-weight: normal;
}

.command {
    position: absolute;
    left: 256px;
    right: 257px;
    bottom: 0;
    font-family: "DejaVu Sans Mono", monospace;
}

.history {
    display: flex;
    flex-direction: column;
    align-items: flex-start;
    gap: 3px;
    padding: 0 0 3px 40px;
    color: #eceded;
}

.history span {
    padding: 0 1px;
    border-radius: 1px;
    background: #5c5f62;
}

.history .old {
    color: #b2b5b8;
}

.command-line {
    display: flex;
    align-items: center;
    height: 17px;
    background: #fff;
    color: #111;
}

.command-tools {
    display: flex;
    align-items: center;
    justify-content: space-between;
    align-self: stretch;
    width: 36px;
    padding: 0 4px 0 2px;
    background: #2c333f;
}

.weld {
    margin-left: 2px;
}

.command-line input {
    flex: 1;
    min-width: 0;
    font-weight: bold;
}

.up {
    margin: 0 3px;
}

/* dialog */
.dialog {
    position: absolute;
    left: 601px;
    top: 88px;
    z-index: 3;
    display: flex;
    flex-direction: column;
    width: 598px;
    background: #f0f0f0;
    color: #1d1d1d;
    box-shadow: 0 2px 7px rgba(0, 0, 0, 0.5);
    font-family: "Open Sans", sans-serif;
    font-size: 7px;
}

.dialog-title {
    display: flex;
    align-items: center;
    gap: 4px;
    height: 19px;
    padding: 0 5px;
    background: #fff;
    font-size: 8px;
}

.dialog-title button {
    margin-left: auto;
}

.revision {
    margin: 5px 4px 4px;
}

.tabs {
    display: flex;
    align-items: flex-end;
    padding-left: 4px;
}

.tabs button {
    height: 12px;
    padding: 0 2px;
    border: 1px solid #dcdcdc;
    border-bottom: none;
    background: #f0f0f0;
}

.tabs .active {
    height: 13px;
    padding: 0 3px;
    background: #fff;
}

.page {
    display: flex;
    gap: 7px;
    margin: 0 4px;
    padding: 6px 4px 8px 5px;
    border: 1px solid #dcdcdc;
    background: #fff;
}

.editor {
    flex: 1;
    display: flex;
    flex-direction: column;
}

.legend {
    display: flex;
    align-items: center;
    gap: 4px;
    margin: 0;
    font-size: 7px;
    font-weight: normal;
}

.legend::after {
    content: "";
    flex: 1;
    height: 1px;
    background: #dde0d6;
}

.legend.short {
    margin-right: 34px;
}

.options {
    display: flex;
    align-items: center;
    height: 28px;
    margin: 2px 34px 5px 0;
}

.checks {
    display: flex;
    flex-direction: column;
    gap: 4px;
    width: 82px;
    padding-left: 10px;
}

.dialog label {
    display: flex;
    align-items: center;
    gap: 1px;
}

.dialog input[type="checkbox"] {
    appearance: none;
    width: 9px;
    height: 9px;
    border: 1px solid #333;
    background: #fff;
}

.dialog .off {
    color: #8f8f8f;
}

.dialog .off input[type="checkbox"] {
    border-color: #ccc;
}

.dialog .layout {
    width: 72px;
}

.dash {
    width: 13px;
    height: 1px;
    margin-right: 11px;
    background: #ccc;
}

.line-buttons {
    display: flex;
    gap: 4px;
    margin-left: auto;
}

.push {
    display: flex;
    align-items: center;
    justify-content: center;
    border: 1px solid #adadad;
    background: #e1e1e1;
    height: 15px;
}

.push u {
    text-underline-offset: 1px;
}

.line-buttons .push {
    width: 17px;
    background: #ccc;
}

.line-buttons .light {
    background: #e1e1e1;
}

.weld-row {
    display: flex;
    justify-content: space-between;
    margin-top: 44px;
}

.weld-canvas {
    position: relative;
    width: 304px;
    height: 122px;
}

.node {
    position: absolute;
}

.weld-canvas .ref-line {
    position: absolute;
    left: 0;
    top: 53px;
}

.weld-canvas input {
    top: 71px;
    width: 32px;
    height: 13px;
    border: 1px solid #7a7a7a;
    background: #fff;
}

.flag { left: 4px; top: 19px; width: 23px; height: 21px; }
.around { left: 4px; top: 44px; width: 23px; height: 21px; }
.size-a { left: 36px; }
.size-b { left: 82px; }
.sym-top { left: 123px; top: 23px; width: 23px; height: 19px; }
.dash-top { left: 123px; top: 43px; width: 23px; height: 9px; }
.dash-low { left: 123px; top: 58px; width: 23px; height: 9px; }
.sym-low { left: 123px; top: 68px; width: 23px; height: 18px; }
.contour { left: 187px; top: 71px; width: 14px; height: 13px; }
.tail { left: 288px; top: 20px; width: 15px; height: 72px; }
.pick { left: 223px; top: 106px; width: 39px; appearance: none; }
.chevron { left: 253px; top: 112px; }

.tail-column {
    display: flex;
    flex-direction: column;
    align-items: flex-start;
    gap: 5px;
    width: 110px;
}

.tail-column .push {
    width: 75px;
}

.tail-box {
    display: flex;
    width: 76px;
    height: 72px;
    border: 1px solid #8a8a8a;
}

.tail-box textarea {
    flex: 1;
    min-width: 0;
    resize: none;
}

.scroll {
    display: flex;
    flex-direction: column;
    justify-content: space-between;
    align-items: center;
    width: 12px;
    padding: 4px 0;
    background: #f0f0f0;
}

.tail-column label {
    white-space: nowrap;
}

.clear {
    width: 49px;
    margin: 20px 0 0 1px;
}

.library {
    width: 156px;
    display: flex;
    flex-direction: column;
}

.list {
    flex: 1;
    margin: 3px 2px 3px 1px;
    border: 1px solid #7a7a7a;
    background: #f3f3f3;
}

.list table {
    width: 100%;
    border-collapse: collapse;
    background: #fff;
}

.list th {
    padding: 0;
    border-bottom: 1px solid #ddd;
    background: #f0f0f0;
    font-weight: normal;
}

.head {
    display: flex;
    justify-content: space-between;
    align-items: center;
    height: 15px;
    padding: 0 5px;
}

.list td {
    height: 34px;
    padding: 1px 5px;
    font-size: 8px;
}

.list .thumb {
    width: 64px;
    padding: 1px;
}

.thumb svg {
    background: #212830;
}

.thumb .line {
    fill: none;
    stroke: #00d000;
}

.thumb text {
    fill: #cfcf20;
    font: 15px "Open Sans", sans-serif;
}

.thumb .tiny {
    font-size: 6px;
    font-weight: bold;
}

.thumb .mid {
    font-size: 10px;
}

.thumb .low {
    font-size: 9px;
}

.library-buttons {
    display: flex;
    justify-content: flex-end;
    gap: 4px;
    padding-right: 2px;
}

.library-buttons .push {
    width: 30px;
}

.dialog .push.wide {
    width: 50px;
}

.push.focus {
    border: 2px solid #1374d0;
}

.dialog-footer {
    display: flex;
    gap: 4px;
    padding: 6px 4px 4px;
}

.dialog-footer .first {
    width: 56px;
    margin-right: auto;
}

/* status bar */
.status {
    display: flex;
    justify-content: space-between;
    height: 19px;
    padding: 0 2px 0 8px;
}

.layout-tabs {
    display: flex;
    align-items: flex-start;
    gap: 2px;
    color: #b5bac1;
}

.layout-tabs button {
    height: 12px;
    padding: 0 7px;
    border-radius: 0 0 6px 6px;
    background: #29313b;
}

.layout-tabs .active {
    background: #3b4453;
    color: #fff;
    font-weight: bold;
}

.status-tools {
    display: flex;
    align-items: center;
    gap: 1px;
}

.status-tools button {
    width: 15px;
    height: 15px;
    background: #333c49;
}

.status-tools .text {
    width: 31px;
    margin-right: 2px;
    color: #fff;
}

.status-tools .on {
    background: #4f86c6;
}

.status-tools svg {
    width: 15px;
    height: 15px;
    fill: none;
    stroke: #e6e8ea;
}

.status-tools .caret {
    width: 6px;
    margin: 0 2px;
}

.status-tools .gap {
    margin-left: 3px;
}

/* windows taskbar */
.taskbar {
    display: flex;
    align-items: stretch;
    height: 27px;
    background: linear-gradient(90deg, #203840, #1f3543 60%, #1b2745);
    font-family: "Open Sans", sans-serif;
}

.taskbar button {
    width: 33px;
    display: flex;
    align-items: center;
    justify-content: center;
}

.taskbar .start {
    width: 32px;
}

.search {
    display: flex;
    align-items: center;
    gap: 7px;
    width: 229px;
    padding: 0 8px;
    background: #f2f2f2;
    color: #333;
    font-size: 10px;
}

.search input {
    flex: 1;
    min-width: 0;
}

.search input::placeholder {
    color: #3a3a3a;
    opacity: 1;
}

.taskbar .open {
    border-bottom: 2px solid #76b9ed;
}

.taskbar .current {
    background: #4f616c;
}

.tray {
    display: flex;
    align-items: center;
    gap: 5px;
    margin-left: auto;
    padding-right: 12px;
    color: #fff;
}

.tray time {
    width: 46px;
    text-align: center;
    line-height: 12px;
}

.notes text {
    fill: #fff;
    font-size: 7px;
}
```
